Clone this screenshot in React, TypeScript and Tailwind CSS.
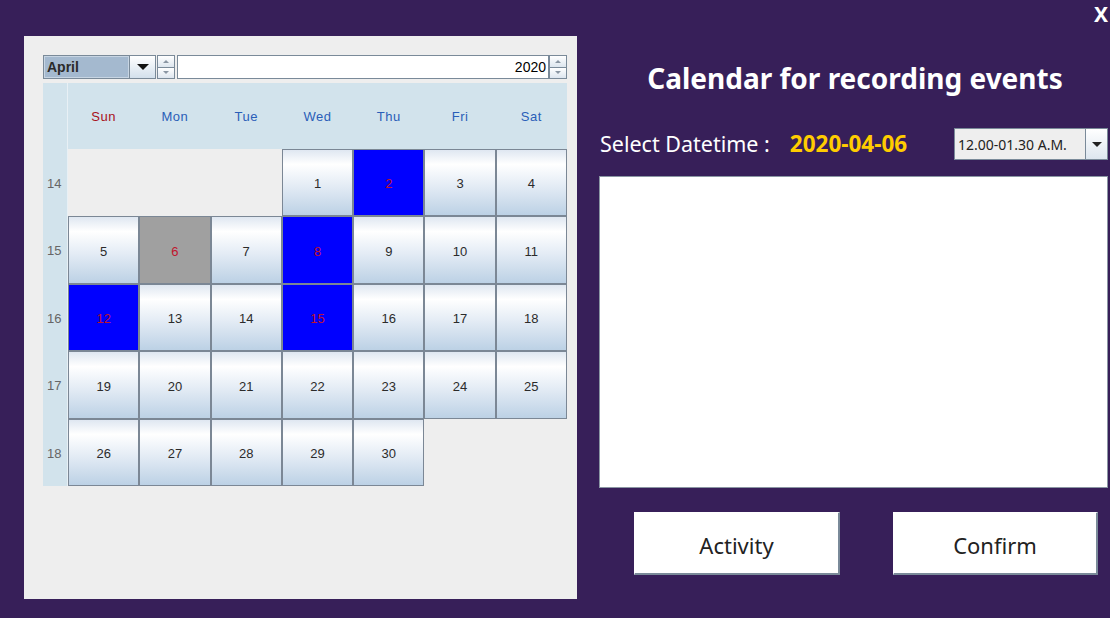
import React from "react";

const days = ["Sun", "Mon", "Tue", "Wed", "Thu", "Fri", "Sat"];
const weeks = [14, 15, 16, 17, 18];

// 0 = empty slot before the 1st / after the 30th
const cells: number[] = [
  0, 0, 0, 1, 2, 3, 4,
  5, 6, 7, 8, 9, 10, 11,
  12, 13, 14, 15, 16, 17, 18,
  19, 20, 21, 22, 23, 24, 25,
  26, 27, 28, 29, 30, 0, 0,
];

const marked = [2, 8, 12, 15];
const selected = 6;

const Spinner = () => (
  <div className="flex h-full w-[18px] flex-col">
    <div className="flex flex-1 items-center justify-center border border-[#7a8a99] bg-[linear-gradient(to_bottom,#ffffff,#dde6ef)]">
      <div className="h-0 w-0 border-x-[3px] border-b-[3px] border-x-transparent border-b-[#8a96a3]" />
    </div>
    <div className="flex flex-1 items-center justify-center border border-t-0 border-[#7a8a99] bg-[linear-gradient(to_bottom,#ffffff,#dde6ef)]">
      <div className="h-0 w-0 border-x-[3px] border-t-[3px] border-x-transparent border-t-[#8a96a3]" />
    </div>
  </div>
);

const DayCell = ({ day }: { day: number }) => {
  if (day === 0) return <div className="bg-[#eeeeee]" />;
  let cls =
    "bg-[linear-gradient(to_bottom,#dfe7f1_0%,#ffffff_22%,#e4ecf5_55%,#bcd1e5_100%)] text-[#2b2b2b]";
  if (marked.includes(day)) cls = "bg-[#0000ff] text-[#c0142c]";
  if (day === selected) cls = "bg-[#a0a0a0] text-[#c0142c]";
  return (
    <div
      className={`flex items-center justify-center border border-[#7b8795] pt-[3px] text-[13px] ${cls}`}
    >
      {day}
    </div>
  );
};

const Calendar = () => (
  <div className="ml-[24px] mt-[36px] h-[563px] w-[553px] bg-[#eeeeee] pl-[19px] pt-[19px] font-['Liberation_Sans',Arial,sans-serif]">
    {/* month / year selectors */}
    <div className="flex h-[24px] w-[524px] items-stretch">
      <div className="flex w-[87px] items-center border border-[#7a8a99] bg-[#a4b9cf] pl-[3px] text-[14px] font-bold text-[#2a2a2a] shadow-[inset_0_0_0_1px_#c7d5e3]">
        April
      </div>
      <div className="flex w-[26px] items-center justify-center border border-l-0 border-[#7a8a99] bg-[linear-gradient(to_bottom,#ffffff,#d3e0ec)]">
        <div className="h-0 w-0 border-x-[6px] border-t-[6px] border-x-transparent border-t-[#111111]" />
      </div>
      <div className="ml-px">
        <Spinner />
      </div>
      <div className="ml-[2px] flex flex-1 items-center justify-end border border-[#7a8a99] bg-white pr-[2px] text-[14px] text-black">
        2020
      </div>
      <Spinner />
    </div>

    {/* grid */}
    <div className="mt-[4px] flex w-[524px]">
      <div className="flex w-[25px] flex-col border-r border-[#e8f0f5] bg-[#d2e3ec]">
        <div className="h-[66px]" />
        {weeks.map((w) => (
          <div
            key={w}
            className="flex h-[67.4px] items-center pl-[4px] pt-[2px] text-[13px] text-[#666666]"
          >
            {w}
          </div>
        ))}
      </div>
      <div className="flex w-[499px] flex-col">
        <div className="grid h-[66px] grid-cols-7 bg-[#d2e3ec]">
          {days.map((d, i) => (
            <div
              key={d}
              className={`flex items-center justify-center pt-[2px] text-[13px] tracking-[0.5px] ${
                i === 0 ? "text-[#a8101a]" : "text-[#2a5eb8]"
              }`}
            >
              {d}
            </div>
          ))}
        </div>
        <div className="grid h-[337px] grid-cols-7 grid-rows-5">
          {cells.map((c, i) => (
            <DayCell key={i} day={c} />
          ))}
        </div>
      </div>
    </div>
  </div>
);

const App = () => {
  return (
    <div className="relative flex h-[618px] w-[1110px] overflow-hidden bg-[#371f59] font-['Noto_Sans','Open_Sans',sans-serif]">
      <div className="absolute right-[2px] top-[1px] text-[21px] font-bold leading-[26px] text-white">
        X
      </div>

      <Calendar />

      <div className="ml-[22px] flex w-[509px] flex-col pt-[60px]">
        <h1 className="h-[36px] pl-[3px] text-center text-[28px] font-bold leading-[36px] text-white">
          Calendar for recording events
        </h1>

        <div className="mt-[32px] flex h-[32px] items-center">
          <span className="pl-px text-[21.5px] text-white">Select Datetime :</span>
          <span className="ml-[20px] text-[22.5px] font-bold text-[#ffcc00]">
            2020-04-06
          </span>
          <div className="ml-auto flex h-[32px] w-[154px] border border-[#7a8a99] bg-[#eeeeee]">
            <div className="flex flex-1 items-center pl-[3px] text-[14px] text-[#222222]">
              12.00-01.30 A.M.
            </div>
            <div className="flex w-[22px] items-center justify-center border-l border-[#7a8a99] bg-[linear-gradient(to_bottom,#ffffff,#dde6ef)]">
              <div className="h-0 w-0 border-x-[5px] border-t-[5px] border-x-transparent border-t-[#222222]" />
            </div>
          </div>
        </div>

        <div className="mt-[16px] h-[312px] border border-[#8a96a3] bg-white" />

        <div className="mt-[24px] flex h-[63px]">
          <button className="ml-[35px] w-[206px] border border-b-2 border-r-2 border-white border-b-[#7a8a99] border-r-[#7a8a99] bg-white pt-[4px] text-[22px] text-[#222222]">
            Activity
          </button>
          <button className="ml-[53px] w-[205px] border border-b-2 border-r-2 border-white border-b-[#7a8a99] border-r-[#7a8a99] bg-white pt-[4px] text-[22px] text-[#222222]">
            Confirm
          </button>
        </div>
      </div>
    </div>
  );
};

export default App;
